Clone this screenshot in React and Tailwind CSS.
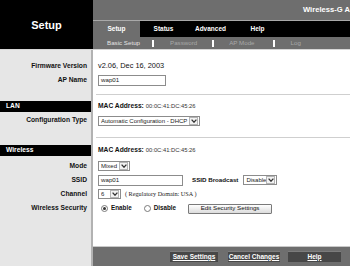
import React from "react";

function Chevron() {
  return (
    <svg width="6" height="4" viewBox="0 0 6 4" className="block">
      <path d="M0.6 0.6 L3 3.2 L5.4 0.6" fill="none" stroke="#333" strokeWidth="1.3" />
    </svg>
  );
}

function Select({ className, text }) {
  return (
    <div className={`flex h-[10px] items-center border border-[#8c8c8c] bg-white pl-[2px] pr-[1px] ${className}`}>
      <span className="flex-1 overflow-hidden whitespace-nowrap text-[6px] leading-none text-[#222]">{text}</span>
      <span className="flex h-[8px] w-[9px] items-center justify-center border border-[#b4b4b4] bg-[#f2f2f2]">
        <Chevron />
      </span>
    </div>
  );
}

function Input({ className, text }) {
  return (
    <div className={`flex h-[11px] items-center border border-[#8c8c8c] bg-white pl-[2px] text-[6.2px] leading-none text-[#222] ${className}`}>
      {text}
    </div>
  );
}

function Radio({ on }) {
  return (
    <span className="flex h-[7px] w-[7px] items-center justify-center rounded-full border border-[#7a7a7a] bg-white">
      {on ? <span className="h-[3px] w-[3px] rounded-full bg-[#333]" /> : null}
    </span>
  );
}

function Row({ h, left, leftClass = "", children, rightClass = "" }) {
  return (
    <div className={`flex ${h}`}>
      <div className={`flex w-[93px] shrink-0 items-center border-r-2 border-[#b2b2b2] ${leftClass || "bg-[#e6e6e6] justify-end pr-[4px]"}`}>
        {left}
      </div>
      <div className={`flex flex-1 items-center bg-white pl-[5px] ${rightClass}`}>{children}</div>
    </div>
  );
}

function Label({ children }) {
  return <span className="whitespace-nowrap text-[6.7px] font-bold leading-none text-[#111]">{children}</span>;
}

function Mac() {
  return (
    <span className="flex items-baseline whitespace-nowrap leading-none">
      <span className="text-[6.7px] font-bold text-[#111]">MAC Address:</span>
      <span className="ml-[2px] text-[5.8px] text-[#333]">00:0C:41:DC:45:26</span>
    </span>
  );
}

function Sep({ h, pt }) {
  return (
    <div className={`flex ${h}`}>
      <div className="w-[93px] shrink-0 border-r-2 border-[#b2b2b2] bg-[#e6e6e6]" />
      <div className={`flex-1 bg-white pl-[3px] ${pt}`}>
        <div className="h-px bg-[#cfcfcf]" />
      </div>
    </div>
  );
}

function Section({ h, title, children }) {
  return (
    <Row h={h} leftClass="bg-black justify-start pl-[6px]" left={<span className="text-[6.7px] font-bold leading-none text-white">{title}</span>}>
      {children}
    </Row>
  );
}

function FootBtn({ className, children }) {
  return (
    <div className={`flex h-[11px] items-center justify-center border-t border-[#7c7c7c] bg-[#474747] text-[6.5px] font-bold leading-none text-white underline ${className}`}>
      {children}
    </div>
  );
}

export default function App() {
  return (
    <div className="flex h-[266px] w-[350px] flex-col overflow-hidden bg-white font-['Liberation_Sans',Arial,sans-serif]">
      {/* header */}
      <div className="flex h-[50px] shrink-0 border-b border-[#d6d6d6]">
        <div className="flex w-[93px] shrink-0 items-center justify-center bg-black pt-[1px]">
          <span className="text-[11px] font-bold leading-none text-white">Setup</span>
        </div>
        <div className="flex flex-1 flex-col overflow-hidden">
          <div className="flex h-[20px] items-center overflow-hidden bg-[#6e6e6e] pl-[210px]">
            <span className="whitespace-nowrap text-[7.6px] font-bold leading-none text-white">Wireless-G Access Point</span>
          </div>
          <div className="h-px bg-[#a9a9a9]" />
          <div className="flex h-[16px] bg-black">
            <div className="flex w-[47px] items-center justify-center bg-[#6e6e6e] text-[6.5px] font-bold leading-none text-white">Setup</div>
            <div className="flex w-[47px] items-center justify-center text-[6.5px] font-bold leading-none text-white">Status</div>
            <div className="flex w-[47px] items-center justify-center text-[6.5px] font-bold leading-none text-white">Advanced</div>
            <div className="flex w-[47px] items-center justify-center text-[6.5px] font-bold leading-none text-white">Help</div>
          </div>
          <div className="flex h-[12px] items-center whitespace-nowrap bg-[#6e6e6e] pl-[14px] text-[6.2px] leading-none">
            <span className="text-[#e4e4e4]">Basic Setup</span>
            <span className="ml-[12px] h-[7px] w-[2px] bg-white" />
            <span className="ml-[16px] text-[#a8a8a8]">Password</span>
            <span className="ml-[15px] h-[7px] w-[2px] bg-white" />
            <span className="ml-[15px] text-[#a8a8a8]">AP Mode</span>
            <span className="ml-[18px] h-[7px] w-[2px] bg-white" />
            <span className="ml-[16px] text-[#a8a8a8]">Log</span>
          </div>
        </div>
      </div>

      {/* body */}
      <div className="flex flex-1 flex-col">
        <Row h="h-[9px]" />
        <Row h="h-[14px]" left={<Label>Firmware Version</Label>}>
          <span className="whitespace-nowrap text-[7.4px] leading-none text-[#111]">v2.06, Dec 16, 2003</span>
        </Row>
        <Row h="h-[14px]" left={<Label>AP Name</Label>}>
          <Input className="w-[68px]" text="wap01" />
        </Row>
        <Sep h="h-[14px]" pt="pt-[7px]" />
        <Section h="h-[11px]" title="LAN">
          <Mac />
        </Section>
        <Row h="h-[17px]" left={<Label>Configuration Type</Label>}>
          <Select className="w-[102px]" text="Automatic Configuration - DHCP" />
        </Row>
        <Sep h="h-[16px]" pt="pt-[8px]" />
        <Section h="h-[11px]" title="Wireless">
          <Mac />
        </Section>
        <Row h="h-[3px]" />
        <Row h="h-[14px]" left={<Label>Mode</Label>}>
          <Select className="w-[32px]" text="Mixed" />
        </Row>
        <Row h="h-[14px]" left={<Label>SSID</Label>}>
          <Input className="w-[85px]" text="wap01" />
          <span className="ml-[9px] whitespace-nowrap text-[6.2px] font-bold leading-none text-[#111]">SSID Broadcast</span>
          <Select className="ml-[5px] w-[34px]" text="Disable" />
        </Row>
        <Row h="h-[14px]" left={<Label>Channel</Label>}>
          <Select className="w-[23px]" text="6" />
          <span className="ml-[4px] whitespace-nowrap font-['Liberation_Serif',serif] text-[6.2px] leading-none text-[#222]">( Regulatory Domain: USA )</span>
        </Row>
        <Row h="h-[15px]" left={<Label>Wireless Security</Label>}>
          <span className="ml-[3px]"><Radio on /></span>
          <span className="ml-[3px] text-[6.3px] font-bold leading-none text-[#111]">Enable</span>
          <span className="ml-[12px]"><Radio /></span>
          <span className="ml-[3px] text-[6.3px] font-bold leading-none text-[#111]">Disable</span>
          <div className="ml-[12px] flex h-[10px] w-[84px] items-center justify-center rounded-[1px] border border-[#7a7a7a] bg-gradient-to-b from-white to-[#dcdcdc] text-[6.2px] leading-none text-[#111]">
            Edit Security Settings
          </div>
        </Row>
        <Row h="flex-1" />
        <div className="flex h-[20px] shrink-0">
          <div className="w-[93px] shrink-0 border-r-2 border-[#b2b2b2] bg-[#e6e6e6]" />
          <div className="flex flex-1 items-center border-t border-[#c9c9c9] bg-[#6e6e6e] pl-[77px]">
            <FootBtn className="w-[48px]">Save Settings</FootBtn>
            <FootBtn className="ml-[10px] w-[52px]">Cancel Changes</FootBtn>
            <FootBtn className="ml-[8px] w-[53px]">Help</FootBtn>
          </div>
        </div>
      </div>
    </div>
  );
}
